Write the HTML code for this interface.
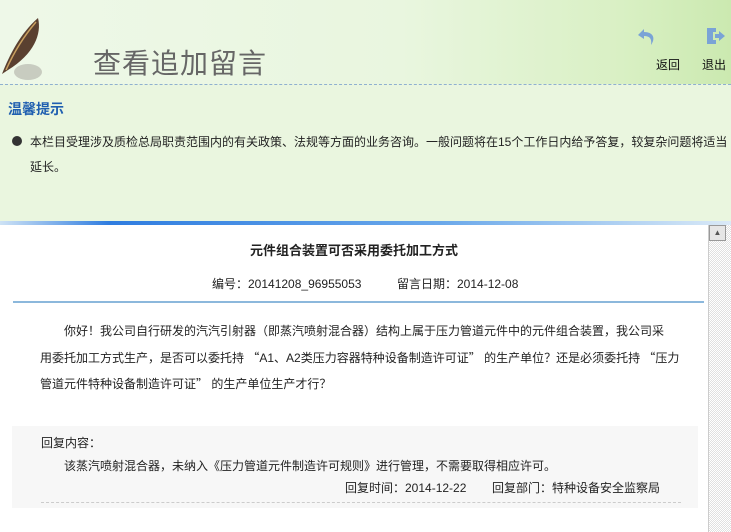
<!DOCTYPE html>
<html><head><meta charset="utf-8"><style>
*{margin:0;padding:0;box-sizing:border-box}
body{width:731px;height:532px;overflow:hidden;font-family:"Liberation Sans","WenQuanYi Zen Hei","Noto Sans CJK SC",sans-serif;font-size:12px;color:#222;background:#eaf6df;position:relative}
.hdr{position:absolute;left:0;top:0;width:731px;height:84px;background:linear-gradient(90deg,#eef8e8 0%,#e9f6df 55%,#d9f0c4 85%,#cbe9b0 100%)}
.dash{position:absolute;left:0;top:84px;width:731px;border-top:1px dashed #8fb0d0}
.t{position:absolute;left:93px;top:42px;font-size:28px;color:#666;letter-spacing:1px}
.a{position:absolute;top:56px;font-size:12px;color:#111}
.tip{position:absolute;left:8px;top:99px;font-size:14px;font-weight:bold;color:#1f5fb0}
.b{position:absolute;left:12px;top:136px;width:10px;height:10px;border-radius:50%;background:#333}
.p{position:absolute;left:30px;top:130px;width:700px;line-height:25px;font-size:12px}
.frame{position:absolute;left:0;top:221px;width:731px;height:311px;background:#fff;border-top:4px solid #4a8ee0;border-image:linear-gradient(90deg,#cfe3f5,#2f7de0 15%,#6aa8ea 60%,#dbeaf7) 1}
.sb{position:absolute;left:708px;top:225px;width:23px;height:307px;background:repeating-conic-gradient(#e0e0e0 0 25%,#fff 0 50%) 0 0/2px 2px;border-left:1px solid #ccc}
.sbb{position:absolute;left:709px;top:225px;width:17px;height:16px;background:#e6e6e6;border:1px solid #999;font-size:8px;text-align:center;line-height:14px;color:#555}
.ti{position:absolute;left:0;width:708px;text-align:center;top:240px;font-size:13px;font-weight:bold}
.m{position:absolute;top:275px;font-size:12px}
.bl{position:absolute;left:13px;top:301px;width:691px;height:2px;background:#8cb8dc}
.q{position:absolute;left:40px;top:319px;width:660px;line-height:25.5px;white-space:nowrap}
.q i{font-style:normal;font-family:"Noto Sans CJK SC",sans-serif}
.r{position:absolute;left:12px;top:426px;width:686px;height:82px;background:#f7f7f7}
.r div{position:absolute}
</style></head><body>
<div class="hdr"></div>
<svg style="position:absolute;left:0;top:14px" width="60" height="66" viewBox="0 0 60 66"><ellipse cx="28" cy="58" rx="14" ry="8" fill="#c8ccc0"/><path d="M2 60 C10 40 20 20 38 4 C42 20 34 40 8 56 Z" fill="#5a4030"/><path d="M6 56 C14 38 24 22 36 8" stroke="#c9a060" stroke-width="1.5" fill="none"/></svg>
<div class="dash"></div>
<div class="t">查看追加留言</div>
<svg style="position:absolute;left:636px;top:26px" width="22" height="20" viewBox="0 0 22 20"><path d="M8 3 L2 9 L8 13 L8 10 C14 10 16 13 15 19 C20 12 17 6 8 6 Z" fill="#7aa3d6"/></svg>
<svg style="position:absolute;left:705px;top:26px" width="22" height="20" viewBox="0 0 22 20"><path d="M2 2 H11 V6 H8 V14 H11 V18 H2 Z" fill="#7aa3d6"/><path d="M10 8 H14 V5 L20 10 L14 15 V12 H10 Z" fill="#7aa3d6"/></svg>
<div class="a" style="left:656px">返回</div>
<div class="a" style="left:702px">退出</div>
<div class="tip">温馨提示</div>
<div class="b"></div>
<div class="p">本栏目受理涉及质检总局职责范围内的有关政策、法规等方面的业务咨询。一般问题将在15个工作日内给予答复，较复杂问题将适当延长。</div>
<div class="frame"></div>
<div class="sb"></div><div class="sbb">▲</div>
<div class="ti">元件组合装置可否采用委托加工方式</div>
<div class="m" style="left:212px">编号：20141208_96955053</div>
<div class="m" style="left:397px">留言日期：2014-12-08</div>
<div class="bl"></div>
<div class="q">　　你好！我公司自行研发的汽汽引射器（即蒸汽喷射混合器）结构上属于压力管道元件中的元件组合装置，我公司采<br>用委托加工方式生产，是否可以委托持 <i>“</i>A1、A2类压力容器特种设备制造许可证<i>”</i> 的生产单位？还是必须委托持 <i>“</i>压力<br>管道元件特种设备制造许可证<i>”</i> 的生产单位生产才行？</div>
<div class="r">
<div style="left:29px;top:8px">回复内容：</div>
<div style="left:52px;top:31px">该蒸汽喷射混合器，未纳入《压力管道元件制造许可规则》进行管理，不需要取得相应许可。</div>
<div style="left:333px;top:53px">回复时间：2014-12-22</div>
<div style="left:480px;top:53px">回复部门：特种设备安全监察局</div>
<div style="left:29px;top:76px;width:640px;border-top:1px dashed #ccc"></div>
</div>
</body></html>
